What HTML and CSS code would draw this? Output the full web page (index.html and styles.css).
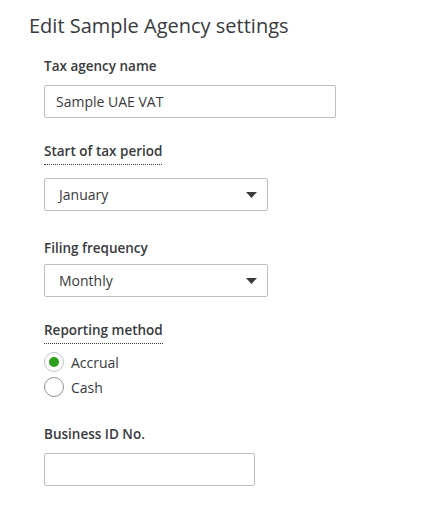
FILE: index.html
```html
<!DOCTYPE html>
<html>
<head>
<meta charset="utf-8">
<link rel="stylesheet" href="styles.css">
</head>
<body>
<div class="page">
  <h1 class="title">Edit Sample Agency settings</h1>
  <div class="form">
    <div class="field f1">
      <label class="label">Tax agency name</label>
      <div class="input wide">Sample UAE VAT</div>
    </div>
    <div class="field f2">
      <span class="label dotted">Start of tax period</span>
      <div class="select">
        <span>January</span>
        <svg class="caret" width="11" height="6" viewBox="0 0 11 6"><path d="M0 0 H11 L5.5 6 Z" fill="#393a3d"/></svg>
      </div>
    </div>
    <div class="field f3">
      <label class="label">Filing frequency</label>
      <div class="select">
        <span>Monthly</span>
        <svg class="caret" width="11" height="6" viewBox="0 0 11 6"><path d="M0 0 H11 L5.5 6 Z" fill="#393a3d"/></svg>
      </div>
    </div>
    <div class="field f4">
      <span class="label dotted">Reporting method</span>
      <div class="radios">
        <div class="radio-row"><span class="radio checked"></span><span>Accrual</span></div>
        <div class="radio-row"><span class="radio"></span><span>Cash</span></div>
      </div>
    </div>
    <div class="field f5">
      <label class="label">Business ID No.</label>
      <div class="input narrow"></div>
    </div>
  </div>
</div>
</body>
</html>
```

FILE: styles.css
```css
html, body {
  margin: 0;
  padding: 0;
  background: #ffffff;
}
body {
  font-family: "Open Sans", "Noto Sans", sans-serif;
  color: #393a3d;
  width: 424px;
  height: 516px;
  overflow: hidden;
}
.page {
  padding: 12px 0 0 29px;
}
.title {
  margin: 0;
  font-size: 20px;
  font-weight: 400;
  line-height: 28px;
  color: #393a3d;
}
.form {
  padding-left: 15px;
  margin-top: 17px;
}
.field {
  display: flex;
  flex-direction: column;
  align-items: flex-start;
}
.label {
  display: block;
  font-size: 13.5px;
  font-weight: 600;
  line-height: 19px;
  color: #393a3d;
  margin-bottom: 9px;
}
.dotted {
  border-bottom: 1px dotted #393a3d;
  padding-bottom: 3px;
  margin-bottom: 13px;
}
.input, .select {
  box-sizing: border-box;
  height: 33px;
  border: 1px solid #babec5;
  border-radius: 2px;
  font-size: 14px;
  display: flex;
  align-items: center;
  color: #393a3d;
}
.input {
  padding-left: 11px;
}
.wide { width: 292px; }
.narrow { width: 211px; }
.select {
  width: 224px;
  padding: 0 10px 0 14px;
  justify-content: space-between;
}
.caret { display: block; }
.f2 { margin-top: 24px; }
.f3 { margin-top: 28px; }
.f3 .label { margin-bottom: 6px; }
.f4 { margin-top: 24px; }
.f4 .dotted { margin-bottom: 8px; }
.f5 { margin-top: 28px; }
.radios {
  display: flex;
  flex-direction: column;
  gap: 5px;
}
.radio-row {
  display: flex;
  align-items: center;
  gap: 7px;
  font-size: 14px;
  height: 20px;
}
.radio {
  box-sizing: border-box;
  width: 20px;
  height: 20px;
  border-radius: 50%;
  border: 1px solid #8d9096;
  display: flex;
  align-items: center;
  justify-content: center;
}
.radio.checked {
  border-color: #c1c4c9;
}
.radio.checked::after {
  content: "";
  width: 10px;
  height: 10px;
  border-radius: 50%;
  background: #2ca01c;
}
```
